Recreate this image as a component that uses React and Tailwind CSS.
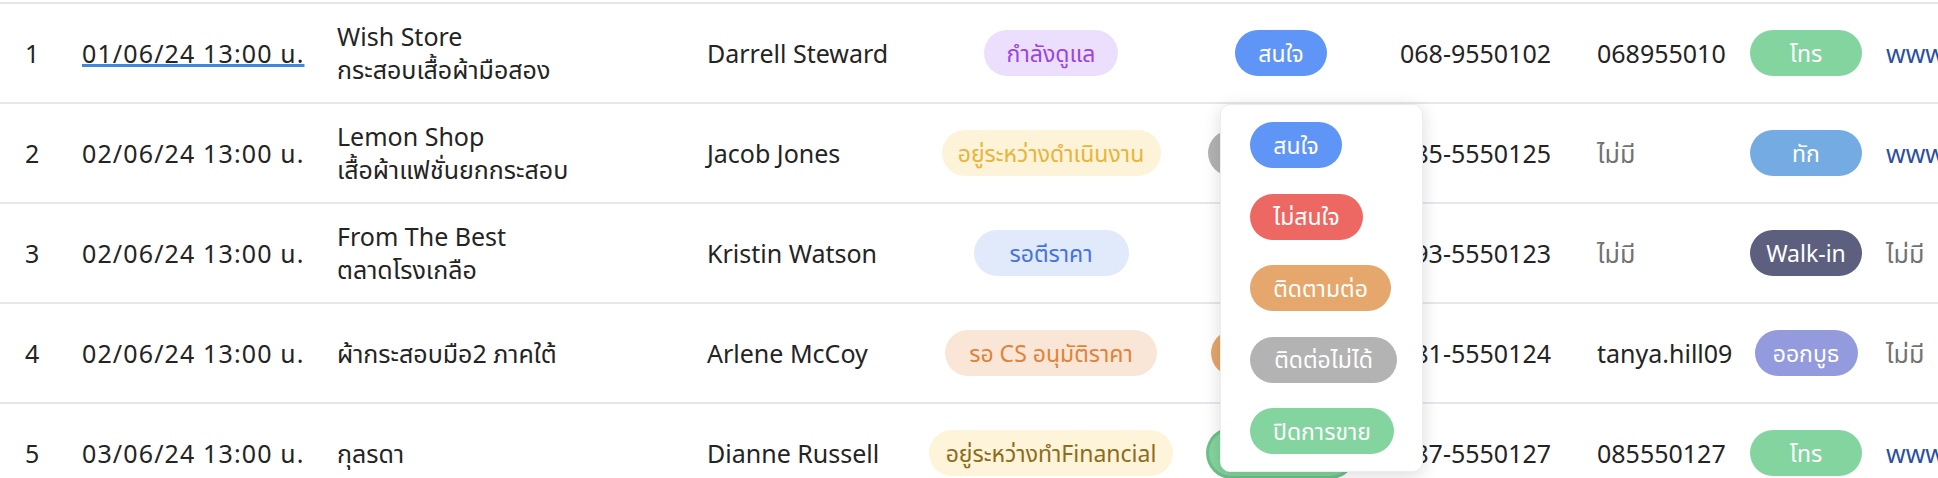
import React from 'react';

const statusStyles = {
  'กำลังดูแล': 'w-[134px] bg-[#ecdffd] text-[#9a45e3]',
  'อยู่ระหว่างดำเนินงาน': 'w-[219px] bg-[#fdf3d8] text-[#e8b43a]',
  'รอตีราคา': 'w-[155px] bg-[#e1eafb] text-[#4573e0]',
  'รอ CS อนุมัติราคา': 'w-[212px] bg-[#f9e6d7] text-[#e08338]',
  'อยู่ระหว่างทำFinancial': 'w-[244px] bg-[#fdf4d9] text-[#8d6c1c]',
};

const interestStyles = {
  'สนใจ': 'w-[92px] bg-[#5f95f7]',
  'ไม่สนใจ': 'w-[113px] bg-[#ee6863]',
  'ติดตามต่อ': 'w-[141px] bg-[#e5a76b]',
  'ติดต่อไม่ได้': 'w-[147px] bg-[#b3b3b3]',
  'ปิดการขาย': 'w-[144px] bg-[#84d49f]',
};

const channelStyles = {
  'โทร': 'w-[112px] bg-[#84d49f]',
  'ทัก': 'w-[112px] bg-[#74abe2]',
  'Walk-in': 'w-[112px] bg-[#5c607e]',
  'ออกบูธ': 'w-[103px] bg-[#949ade]',
};

const rows = [
  {
    no: 1, date: '01/06/24 13:00 น.', title: ['Wish Store', 'กระสอบเสื้อผ้ามือสอง'], name: 'Darrell Steward',
    status: 'กำลังดูแล', interest: 'สนใจ', phone: '068-9550102', contact: '068955010', channel: 'โทร', link: 'www.wishstore.com',
  },
  {
    no: 2, date: '02/06/24 13:00 น.', title: ['Lemon Shop', 'เสื้อผ้าแฟชั่นยกกระสอบ'], name: 'Jacob Jones',
    status: 'อยู่ระหว่างดำเนินงาน', interest: 'ติดต่อไม่ได้', phone: '085-5550125', contact: null, channel: 'ทัก', link: 'www.lemonshop.com',
  },
  {
    no: 3, date: '02/06/24 13:00 น.', title: ['From The Best', 'ตลาดโรงเกลือ'], name: 'Kristin Watson',
    status: 'รอตีราคา', interest: 'ไม่สนใจ', phone: '093-5550123', contact: null, channel: 'Walk-in', link: null,
  },
  {
    no: 4, date: '02/06/24 13:00 น.', title: ['ผ้ากระสอบมือ2 ภาคใต้'], name: 'Arlene McCoy',
    status: 'รอ CS อนุมัติราคา', interest: 'ติดตามต่อ', phone: '081-5550124', contact: 'tanya.hill09', channel: 'ออกบูธ', link: null,
  },
  {
    no: 5, date: '03/06/24 13:00 น.', title: ['กุลรดา'], name: 'Dianne Russell',
    status: 'อยู่ระหว่างทำFinancial', interest: 'ปิดการขาย', phone: '087-5550127', contact: '085550127', channel: 'โทร', link: 'www.kulrada.com', focused: true,
  },
];

const Pill = ({ className, children }) => (
  <span className={`inline-flex h-[46px] items-center justify-center rounded-full text-[23px] leading-none whitespace-nowrap ${className}`}>
    {children}
  </span>
);

const Empty = () => <span className="text-[#727272]">ไม่มี</span>;

const InterestMenu = () => (
  <div className="absolute left-[39px] top-[100px] z-20 flex h-[368px] w-[203px] flex-col gap-[25.5px] rounded-[10px] border border-[#ededed] bg-white pl-[29px] pt-[17px] shadow-[0_4px_18px_rgba(0,0,0,0.14)]">
    {Object.keys(interestStyles).map((label) => (
      <Pill key={label} className={`text-white ${interestStyles[label]}`}>{label}</Pill>
    ))}
  </div>
);

export default function App() {
  return (
    <div className="h-[478px] w-full overflow-hidden bg-white font-['Noto_Sans','Noto_Sans_Thai',sans-serif] text-[25px] leading-[33px] text-[#242424]">
      <div className="w-[2300px] pt-[2px]">
        <div className="border-t-2 border-[#e6e6ef]" />
        {rows.map((r) => (
          <div
            key={r.no}
            className="grid h-[100px] grid-cols-[82px_255px_370px_214px_260px_200px_216px_153px_112px_1fr] items-center border-b-2 border-[#e6e6ef]"
          >
            <div className="pl-[25px]">{r.no}</div>
            <div className="whitespace-nowrap tracking-[0.045em]">
              {r.no === 1 ? (
                <span className="underline decoration-[#3d87df] decoration-[3px] underline-offset-[1px] [text-decoration-skip-ink:none]">
                  {r.date}
                </span>
              ) : (
                r.date
              )}
            </div>
            <div className="whitespace-nowrap">
              {r.title.map((t) => (
                <div key={t}>{t}</div>
              ))}
            </div>
            <div className="whitespace-nowrap">{r.name}</div>
            <div className="flex justify-center">
              <Pill className={statusStyles[r.status]}>{r.status}</Pill>
            </div>
            <div className="relative flex items-center justify-center self-stretch">
              <Pill
                className={`text-white ${interestStyles[r.interest]} ${r.focused ? 'ring-[3px] ring-[#6fc08b]' : ''}`}
              >
                {r.interest}
              </Pill>
              {r.no === 1 && <InterestMenu />}
            </div>
            <div className="pl-[19px] whitespace-nowrap">{r.phone}</div>
            <div className="whitespace-nowrap">{r.contact ? r.contact : <Empty />}</div>
            <div className="flex justify-center">
              <Pill className={`text-white ${channelStyles[r.channel]}`}>{r.channel}</Pill>
            </div>
            <div className="pl-[24px] whitespace-nowrap">
              {r.link ? <span className="text-[#2c4f9e]">{r.link}</span> : <Empty />}
            </div>
          </div>
        ))}
      </div>
    </div>
  );
}
